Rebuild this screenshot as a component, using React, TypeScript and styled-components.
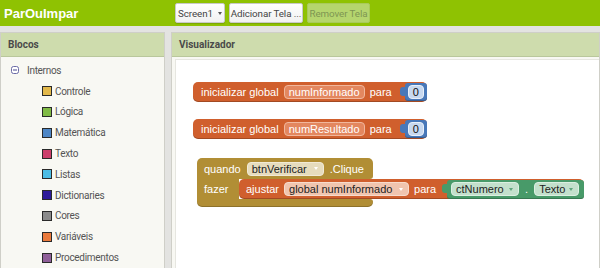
import React from 'react';
import styled, { createGlobalStyle } from 'styled-components';

const Global = createGlobalStyle`
  html, body { margin: 0; padding: 0; }
  body {
    width: 600px; height: 268px; overflow: hidden;
    background: #e3e3e1;
    font-family: Roboto, "Liberation Sans", sans-serif;
  }
`;

const Page = styled.div`
  width: 600px; height: 268px;
  display: flex; flex-direction: column;
  overflow: hidden;
`;

const TopBar = styled.header`
  height: 26px; flex-shrink: 0;
  background: #8fc202;
  display: flex; align-items: center;
`;

const Title = styled.div`
  width: 175px; box-sizing: border-box;
  padding-left: 4px;
  color: #fff; font-weight: 700; font-size: 13px;
  font-family: "Liberation Sans", Arial, sans-serif;
`;

const Toolbar = styled.div`
  display: flex; align-items: center; gap: 4px;
`;

const TbButton = styled.div<{ $w: number; $disabled?: boolean }>`
  width: ${p => p.$w}px; height: 20px; box-sizing: border-box;
  display: flex; align-items: center; justify-content: center; gap: 5px;
  font-size: 9.8px;
  letter-spacing: -0.1px;
  border-radius: 2px;
  color: ${p => (p.$disabled ? '#7e9552' : '#444')};
  background: ${p => (p.$disabled ? '#b5d56e' : 'linear-gradient(#ffffff, #f1f1f1)')};
  border: 1px solid ${p => (p.$disabled ? '#a8ca5c' : '#c9c9c9')};
  box-shadow: ${p => (p.$disabled ? 'none' : '0 1px 1px rgba(0,0,0,0.15)')};
`;

const Caret = styled.span<{ $c: string }>`
  width: 0; height: 0;
  border-left: 2.5px solid transparent;
  border-right: 2.5px solid transparent;
  border-top: 3px solid ${p => p.$c};
`;

const Main = styled.div`
  flex: 1; display: flex; gap: 6px;
  padding-top: 6px;
  min-height: 0;
`;

const Panel = styled.section<{ $w?: number }>`
  ${p => (p.$w ? `width: ${p.$w}px;` : 'flex: 1;')}
  flex-shrink: 0;
  display: flex; flex-direction: column;
  box-sizing: border-box;
  border: 1px solid #cfcfc8;
  border-bottom: none;
  background: #f8f8f3;
  min-width: 0;
`;

const PanelHeader = styled.div`
  height: 23px; flex-shrink: 0;
  display: flex; align-items: center;
  padding-left: 7px;
  background: #cedcad;
  border-bottom: 1px solid #b9c79c;
  color: #4a4a4a; font-weight: 700; font-size: 10px;
`;

const Tree = styled.div`
  padding-top: 3px;
  display: flex; flex-direction: column;
`;

const TreeRow = styled.div<{ $indent: number }>`
  height: 20.8px;
  display: flex; align-items: center;
  padding-left: ${p => p.$indent}px;
  color: #555; font-size: 10px;
  letter-spacing: -0.3px;
`;

const Toggle = styled.svg`
  width: 8px; height: 8px; margin-right: 8px; flex-shrink: 0;
`;

const Swatch = styled.span<{ $c: string }>`
  width: 10px; height: 10px; flex-shrink: 0;
  box-sizing: border-box;
  background: ${p => p.$c};
  border: 1px solid #2a2a2a;
  margin-right: 3px;
`;

const ViewBody = styled.div`
  flex: 1; display: flex;
  padding: 2px 0 0 3px;
  min-height: 0;
`;

const Workspace = styled.div`
  flex: 1; position: relative;
  background: #fff;
  border-top: 1px solid #e6e6e0;
  border-left: 1px solid #e6e6e0;
  font-family: "Liberation Sans", Arial, sans-serif;
  font-size: 11px;
  color: #fff;
  overflow: hidden;
`;

const Placed = styled.div<{ $x: number; $y: number }>`
  position: absolute;
  left: ${p => p.$x}px; top: ${p => p.$y}px;
`;

const Block = styled.div<{ $bg: string; $h: number; $pl: number; $pr: number }>`
  position: relative;
  height: ${p => p.$h}px;
  box-sizing: border-box;
  display: flex; align-items: center; gap: 5px;
  padding: 0 ${p => p.$pr}px 0 ${p => p.$pl}px;
  background: ${p => p.$bg};
  border-radius: 5px;
  box-shadow: inset 0 -1px 0 rgba(0,0,0,0.22);
  white-space: nowrap;
  flex-shrink: 0;
`;

const ValueBlock = styled(Block)<{ $ml: number }>`
  margin-left: ${p => p.$ml}px;
  border-radius: 3px;
  &::before {
    content: '';
    position: absolute;
    left: -5px; top: 4px;
    width: 6px; height: 9px;
    background: ${p => p.$bg};
    border-radius: 3px 0 0 3px;
  }
`;

const Label = styled.span`
  color: #fff;
`;

const Field = styled.span<{ $bg: string; $fg: string; $w: number; $bd: string }>`
  width: ${p => p.$w}px; height: 14px;
  box-sizing: border-box;
  display: flex; align-items: center; justify-content: space-between;
  padding: 0 5px 0 4px;
  background: ${p => p.$bg};
  color: ${p => p.$fg};
  border: 1px solid ${p => p.$bd};
  border-radius: 4px;
  flex-shrink: 0;
`;

const EventBlock = styled.div`
  display: flex; flex-direction: column;
`;

const EventTop = styled.div`
  width: 176px; height: 21px;
  box-sizing: border-box;
  display: flex; align-items: center; gap: 6px;
  padding-left: 7px;
  background: #b18e35;
  border-radius: 5px 5px 3px 0;
`;

const EventMid = styled.div`
  display: flex; align-items: stretch;
`;

const EventArm = styled.div`
  width: 42px; height: 20px;
  box-sizing: border-box;
  display: flex; align-items: center;
  padding-left: 7px;
  background: #b18e35;
`;

const EventBottom = styled.div`
  width: 176px; height: 8px;
  background: #b18e35;
  border-radius: 0 3px 5px 5px;
  box-shadow: inset 0 -1px 0 rgba(0,0,0,0.2);
`;

const Dot = styled.span`
  color: #fff; margin: 0 1px;
`;

const ORANGE = '#d05f2d';
const BLUE = '#4878b9';
const GREEN = '#489a69';

const categories: { name: string; color: string }[] = [
  { name: 'Controle', color: '#e2b84a' },
  { name: 'Lógica', color: '#80bb45' },
  { name: 'Matemática', color: '#4d86c6' },
  { name: 'Texto', color: '#cc3f6c' },
  { name: 'Listas', color: '#4cbde6' },
  { name: 'Dictionaries', color: '#2d1a9a' },
  { name: 'Cores', color: '#8a8a8a' },
  { name: 'Variáveis', color: '#ea7a3c' },
  { name: 'Procedimentos', color: '#8f5f99' },
];

function InitBlock({ y, name, w }: { y: number; name: string; w: number }) {
  return (
    <Placed $x={17} $y={y}>
      <Block $bg={ORANGE} $h={20} $pl={8} $pr={0}>
        <Label>inicializar global</Label>
        <Field $bg="#e3875f" $fg="#fff" $bd="#f1b79c" $w={w}>{name}</Field>
        <Label>para</Label>
        <ValueBlock $bg={BLUE} $h={18} $pl={3} $pr={3} $ml={8}>
          <Field $bg="#c7d8ef" $fg="#111" $bd="#e8f0fa" $w={16}>0</Field>
        </ValueBlock>
      </Block>
    </Placed>
  );
}

export default function App() {
  return (
    <>
      <Global />
      <Page>
        <TopBar>
          <Title>ParOuImpar</Title>
          <Toolbar>
            <TbButton $w={50}>Screen1 <Caret $c="#555" /></TbButton>
            <TbButton $w={74}>Adicionar Tela ...</TbButton>
            <TbButton $w={63} $disabled>Remover Tela</TbButton>
          </Toolbar>
        </TopBar>
        <Main>
          <Panel $w={165}>
            <PanelHeader>Blocos</PanelHeader>
            <Tree>
              <TreeRow $indent={10}>
                <Toggle viewBox="0 0 8 8">
                  <rect x="0.5" y="0.5" width="7" height="7" rx="2" fill="#fff" stroke="#6b6ba6" strokeWidth="1" />
                  <line x1="2" y1="4" x2="6" y2="4" stroke="#4b4b8f" strokeWidth="1" />
                </Toggle>
                Internos
              </TreeRow>
              {categories.map(c => (
                <TreeRow key={c.name} $indent={41}>
                  <Swatch $c={c.color} />
                  {c.name}
                </TreeRow>
              ))}
            </Tree>
          </Panel>
          <Panel>
            <PanelHeader>Visualizador</PanelHeader>
            <ViewBody>
              <Workspace>
                <InitBlock y={22} name="numInformado" w={81} />
                <InitBlock y={59} name="numResultado" w={81} />
                <Placed $x={21} $y={98}>
                  <EventBlock>
                    <EventTop>
                      <Label>quando</Label>
                      <Field $bg="#e6dcbd" $fg="#222" $bd="#f1ead6" $w={77}>
                        btnVerificar <Caret $c="#fff" />
                      </Field>
                      <Label>.Clique</Label>
                    </EventTop>
                    <EventMid>
                      <EventArm><Label>fazer</Label></EventArm>
                      <Block $bg={ORANGE} $h={20} $pl={7} $pr={0}>
                        <Label>ajustar</Label>
                        <Field $bg="#f0c5af" $fg="#222" $bd="#f7dccd" $w={125}>
                          global numInformado <Caret $c="#fff" />
                        </Field>
                        <Label>para</Label>
                        <ValueBlock $bg={GREEN} $h={19} $pl={4} $pr={5} $ml={6}>
                          <Field $bg="#c3e0cc" $fg="#222" $bd="#dcefe2" $w={68}>
                            ctNumero <Caret $c="#5fa57d" />
                          </Field>
                          <Dot>.</Dot>
                          <Field $bg="#c3e0cc" $fg="#222" $bd="#dcefe2" $w={45}>
                            Texto <Caret $c="#5fa57d" />
                          </Field>
                        </ValueBlock>
                      </Block>
                    </EventMid>
                    <EventBottom />
                  </EventBlock>
                </Placed>
              </Workspace>
            </ViewBody>
          </Panel>
        </Main>
      </Page>
    </>
  );
}
